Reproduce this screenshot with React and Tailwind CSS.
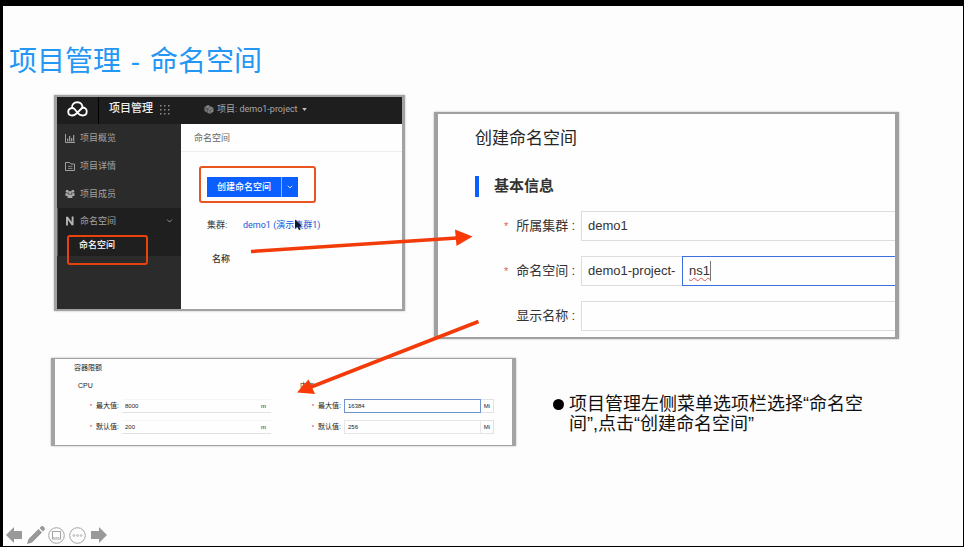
import React from "react";

const sans = "font-['Liberation_Sans','Noto_Sans_CJK_SC',sans-serif]";
const ui = "font-['Roboto','Noto_Sans_CJK_SC',sans-serif]";

function CloudLogo() {
  return (
    <svg viewBox="0 0 42 32" className="h-4 w-[21px]" fill="none" stroke="#fff" strokeWidth="3.6" strokeLinecap="round" strokeLinejoin="round">
      <path d="M10 14C9 7 14 2.500 20.500 2.500C27 2.500 31 7 31 13" />
      <path d="M31 13C36 13 39.500 16.500 39.500 21C39.500 26 36 29 31 29C26 29 23 26 20 22L14.500 15.500C11 12.500 2.500 14 2.500 21.500C2.500 26 6 29 10.500 29C15 29 17.500 26.500 20 24L31 13" />
    </svg>
  );
}

function DotGrid() {
  return (
    <svg viewBox="0 0 10 10" className="size-[10px]" fill="#8a8a8a">
      {[0, 4, 8].map((y) => [0, 4, 8].map((x) => <rect key={`${x}-${y}`} x={x} y={y} width="1.500" height="1.500" />))}
    </svg>
  );
}

function CubesIcon() {
  return (
    <svg viewBox="0 0 20 18" className="h-[9px] w-[10px]">
      <path d="M1 4L8 0L14 3L19 6V13L12 18L6 15L1 12Z" fill="#858585" />
      <path d="M1 4L7 7L14 3M7 7V15M7 8L12 11L19 6M12 11V18M4 6V13" stroke="#3a3a3a" strokeWidth="1.200" fill="none" />
    </svg>
  );
}

function ChartIcon() {
  return (
    <svg viewBox="0 0 10 9" className="h-[9px] w-[10px]" fill="none" stroke="#a0a0a0">
      <path d="M.5 0V8.500H10" />
      <path d="M2.700 7.500V4.500M4.700 7.500V2M6.700 7.500V4M8.700 7.500V1" strokeWidth="1.200" />
    </svg>
  );
}

function FileIcon() {
  return (
    <svg viewBox="0 0 10 9" className="h-[9px] w-[10px]" fill="none" stroke="#a0a0a0">
      <path d="M.5 8.500V.5H4.500L5.800 2H9.500V8.500Z" />
      <path d="M3 4.300H7.500M3 6.400H7.500" strokeWidth=".8" />
    </svg>
  );
}

function PeopleIcon() {
  return (
    <svg viewBox="0 0 10 10" className="size-[10px]" fill="#a8a8a8">
      <circle cx="2.200" cy="2.200" r="1.500" />
      <circle cx="7.800" cy="2.200" r="1.500" />
      <circle cx="5" cy="3.600" r="1.600" />
      <path d="M.3 4.200H3L3.600 5.300L2.300 7H.6ZM9.700 4.200H7L6.400 5.300L7.700 7H9.400ZM2.600 6.200C3.500 5.400 6.500 5.400 7.400 6.200V9H2.600Z" />
    </svg>
  );
}

function LetterIcon() {
  return (
    <svg viewBox="0 0 10 10" className="size-[10px]" fill="none" stroke="#b4b4b4" strokeWidth="1.900">
      <path d="M2 9.500V.8M2 1L7.600 9M7.600 9.200V.5" />
    </svg>
  );
}

function Chevron({ className }) {
  return (
    <svg viewBox="0 0 8 5" className={className} fill="none" stroke="currentColor" strokeWidth="1.100">
      <path d="M1 .8L4 3.800L7 .8" />
    </svg>
  );
}

function NavItem({ icon, children }) {
  return (
    <a href="#nav" className="flex h-7 items-center gap-[5px] pl-2 text-[9px] text-[#a3a3a3]">
      {icon}
      <span className="pt-[2px]">{children}</span>
    </a>
  );
}

function ConsolePanel() {
  return (
    <section className={`w-[351px] shrink-0 self-start border-2 border-l-3 border-r-3 border-[#a2a2a2] bg-[#fefefe] shadow-[0_0_2px_#bbb] ${ui}`}>
      <header className="flex h-[27px] items-center bg-[#1e1e1e]">
        <div className="flex h-full w-[42px] items-center border-r border-black pb-1 pl-[10px]">
          <CloudLogo />
        </div>
        <h2 className="pb-[2px] pl-[10px] pr-[7px] text-[11px] font-medium text-[#eee]">项目管理</h2>
        <div className="pb-[2px]">
          <DotGrid />
        </div>
        <button className="ml-[34px] flex items-center gap-[3px] pb-[2px] text-[9px] text-[#a8a8a8]">
          <CubesIcon />
          项目: demo1-project
          <svg viewBox="0 0 6 4" className="ml-px h-[3px] w-[5px]" fill="#c4c4c4"><path d="M0 0H6L3 4Z" /></svg>
        </button>
      </header>
      <div className="flex h-[185px]">
        <nav className="relative w-[124px] shrink-0 bg-[#2b2b2b]">
          <NavItem icon={<ChartIcon />}>项目概览</NavItem>
          <NavItem icon={<FileIcon />}>项目详情</NavItem>
          <NavItem icon={<PeopleIcon />}>项目成员</NavItem>
          <div className="border-l border-[#1f62e8] bg-[#1f1f1f]">
            <button className="flex h-[26px] w-full items-center gap-[5px] pl-[7px] pr-2 text-[9px] text-[#a3a3a3]">
              <LetterIcon />
              <span className="pt-[2px]">命名空间</span>
              <Chevron className="ml-auto h-1 w-[7px]" />
            </button>
            <a href="#namespaces" className="flex h-[22px] items-center pl-[21px] pt-[2px] text-[9px] font-medium text-white">命名空间</a>
          </div>
          <span className="absolute left-[10px] top-[111px] h-[30px] w-[81px] rounded-[3px] border-2 border-[#e8430f]" />
        </nav>
        <div className="flex-1 text-[9px] text-[#333]">
          <p className="flex h-7 items-center border-b border-[#eee] pl-[13px] pt-[2px] text-[#666]">命名空间</p>
          <div className="ml-[18px] mt-[14px] w-[117px] rounded-[3px] border-2 border-[#e9541f] px-[6px] pb-1 pt-[9px]">
            <div className="flex h-5 w-[91px]">
              <button className="w-[74px] bg-[#0b5fff] pt-[2px] font-medium text-white">创建命名空间</button>
              <button aria-label="更多" className="flex flex-1 items-center justify-center border-l border-[#8db4ff] bg-[#0b5fff] text-white">
                <Chevron className="h-1 w-[6px]" />
              </button>
            </div>
          </div>
          <p className="mt-[15px] flex h-4 items-center pl-[26px]">
            <span className="w-9">集群:</span>
            <a href="#cluster" className="relative text-[#1558d6]">
              demo1 (演示集群1)
              <svg viewBox="0 0 10 14" className="absolute left-[52px] top-0 h-3 w-2" fill="#10192e"><path d="M0 0V11.500L3 9L5 13.500L7 12.500L5 8.500H9Z" /></svg>
            </a>
          </p>
          <p className="mt-[18px] flex h-4 items-center pl-[31px] font-medium">名称</p>
        </div>
      </div>
    </section>
  );
}

function FieldLabel({ htmlFor, required, children }) {
  return (
    <label htmlFor={htmlFor} className="flex w-[143px] shrink-0 items-center justify-end pr-[6px]">
      {required && <span className="mr-2 text-[11px] text-[#dc6650]">*</span>}
      {children}
      <span className="pl-[3px]">:</span>
    </label>
  );
}

function NamespaceForm() {
  return (
    <section className={`mt-[17px] flex-1 self-start border-2 border-l-4 border-r-4 border-[#a0a0a0] bg-[#fefefe] pb-[6px] text-[13px] text-[#333] shadow-[0_0_2px_#bbb] ${sans}`}>
      <h2 className="mt-[13px] pl-[37px] text-[17px] leading-6 text-[#262626]">创建命名空间</h2>
      <h3 className="ml-[37px] mt-[25px] flex h-[21px] items-center border-l-4 border-[#0b5fff] pl-[15px] text-[15px] font-bold">基本信息</h3>
      <form className="mt-[14px] flex flex-col gap-[15px]">
        <div className="flex h-[30px]">
          <FieldLabel htmlFor="cluster" required>所属集群</FieldLabel>
          <input id="cluster" defaultValue="demo1" className="min-w-0 flex-1 border border-r-0 border-[#ddd] px-[6px] outline-none" />
        </div>
        <div className="flex h-[30px]">
          <FieldLabel htmlFor="ns" required>命名空间</FieldLabel>
          <span className="flex w-[101px] items-center border border-r-0 border-[#ddd] pl-[6px]">demo1-project-</span>
          <div className="flex min-w-0 flex-1 items-center border border-r-0 border-[#3b6fe0] pl-[6px]">
            <input id="ns" defaultValue="ns1" spellCheck={false} className="w-[22px] border-r border-[#777] underline decoration-[#d9534f] decoration-wavy decoration-1 underline-offset-2 outline-none" />
          </div>
        </div>
        <div className="flex h-[30px]">
          <FieldLabel htmlFor="display">显示名称</FieldLabel>
          <input id="display" className="min-w-0 flex-1 border border-r-0 border-[#ddd] px-[6px] outline-none" />
        </div>
      </form>
    </section>
  );
}

function LimitRow({ id, label, value, unit, boxed, focused }) {
  const box = focused
    ? "border border-[#6f93cf]"
    : boxed
      ? "border border-[#e6e6e6]"
      : "border-y border-t-[#f6f6f6] border-b-[#e2e2e2]";
  const unitBox = boxed ? "w-[13px] justify-center border border-l-0 border-[#e2e2e2]" : "w-[10px] border-y border-t-[#f6f6f6] border-b-[#e2e2e2]";
  return (
    <div className="flex h-[14px]">
      <label htmlFor={id} className="flex w-[67px] items-center justify-end pr-[3px] text-[7px]">
        <span className="mr-1 text-[6px] text-[#d0333a]">*</span>
        {label}:
      </label>
      <input id={id} defaultValue={value} className={`min-w-0 flex-1 px-[3px] text-[6px] outline-none ${box}`} />
      <span className={`flex items-center text-[6px] ${unitBox}`}>{unit}</span>
    </div>
  );
}

function LimitsPanel() {
  return (
    <section className={`w-[465px] shrink-0 border-y border-l-4 border-r-4 border-[#a3a3a3] bg-[#fefefe] pb-[11px] text-[7px] leading-3 text-[#222] shadow-[0_0_2px_#bbb] ${sans}`}>
      <h3 className="mt-[3px] pl-[19px]">容器限额</h3>
      <div className="mt-[6px] flex gap-[6px]">
        <div className="flex w-[216px] flex-col gap-[7px]">
          <h4 className="pl-[23px] leading-3">CPU</h4>
          <LimitRow id="cpu-max" label="最大值" value="8000" unit="m" />
          <LimitRow id="cpu-default" label="默认值" value="200" unit="m" />
        </div>
        <div className="flex w-[217px] flex-col gap-[7px]">
          <h4 className="pl-[23px] leading-3">内存</h4>
          <LimitRow id="mem-max" label="最大值" value="16384" unit="Mi" boxed focused />
          <LimitRow id="mem-default" label="默认值" value="256" unit="Mi" boxed />
        </div>
      </div>
    </section>
  );
}

function Arrows() {
  return (
    <svg className="pointer-events-none absolute left-0 top-0 h-[420px] w-[500px]" viewBox="3 6 500 420" stroke="#f33a09" fill="#fa3a06">
      <path d="M251 251.500L457 238" strokeWidth="3.500" />
      <path d="M455 229.500L472.500 236.500L456.500 246Z" stroke="none" />
      <path d="M478.500 321.500L311 387" strokeWidth="3.500" />
      <path d="M308.500 379.500L297 392.500L315 394Z" stroke="none" />
    </svg>
  );
}

function SlideControls() {
  return (
    <footer className="mb-px mt-auto flex h-5 items-center pl-[3px]">
      <button aria-label="上一页">
        <svg viewBox="0 0 16 16" className="size-4" fill="#999"><path d="M0 8L8 0V4H16V12H8V16Z" /></svg>
      </button>
      <button aria-label="画笔" className="ml-[5px]">
        <svg viewBox="0 0 18 18" className="size-[18px]" fill="#999"><path d="M0 18L1.500 13L11.500 3L15 6.500L5 16.500ZM12.500 2L14 .6C15 -.2 16 0 17 1C18 2 18.200 3 17.400 4L16 5.500Z" /></svg>
      </button>
      <button aria-label="幻灯片" className="ml-[3px]">
        <svg viewBox="0 0 17 17" className="size-[17px]" fill="none" stroke="#a3a3a3">
          <circle cx="8.500" cy="8.500" r="7.800" />
          <rect x="4.500" y="4.500" width="8" height="7.500" />
          <path d="M5 10.500H12" strokeWidth=".8" strokeDasharray="1.500 .8" />
        </svg>
      </button>
      <button aria-label="更多选项" className="ml-1">
        <svg viewBox="0 0 17 17" className="size-[17px]" fill="none" stroke="#a3a3a3">
          <circle cx="8.500" cy="8.500" r="7.800" />
          <g strokeWidth=".8">
            <circle cx="4.900" cy="8.500" r=".9" />
            <circle cx="8.500" cy="8.500" r=".9" />
            <circle cx="12.100" cy="8.500" r=".9" />
          </g>
        </svg>
      </button>
      <button aria-label="下一页" className="ml-[5px]">
        <svg viewBox="0 0 16 16" className="size-4" fill="#999"><path d="M16 8L8 0V4H0V12H8V16Z" /></svg>
      </button>
    </footer>
  );
}

export default function App() {
  return (
    <main className={`flex min-h-screen bg-black pb-px pl-[3px] pr-px pt-[6px] ${sans}`}>
      <article className="relative flex flex-1 flex-col bg-[#fdfdfd]">
        <h1 className="mt-9 pl-[6px] text-[28px] leading-10 text-[#2397f3]">
          项目管理<span className="px-[2px]"> - </span>命名空间
        </h1>
        <div className="mt-[13px] flex gap-[29px] pl-[51px] pr-16">
          <ConsolePanel />
          <NamespaceForm />
        </div>
        <div className="mt-[19px] flex pl-12">
          <LimitsPanel />
          <ul className="ml-[37px] pt-9">
            <li className="flex w-[316px] gap-[5px] text-[18px] leading-5 text-[#111]">
              <span className="mt-[5px] size-[11px] shrink-0 rounded-full bg-black" />
              <span>项目管理左侧菜单选项栏选择“命名空间”,点击“创建命名空间”</span>
            </li>
          </ul>
        </div>
        <SlideControls />
        <Arrows />
      </article>
    </main>
  );
}
